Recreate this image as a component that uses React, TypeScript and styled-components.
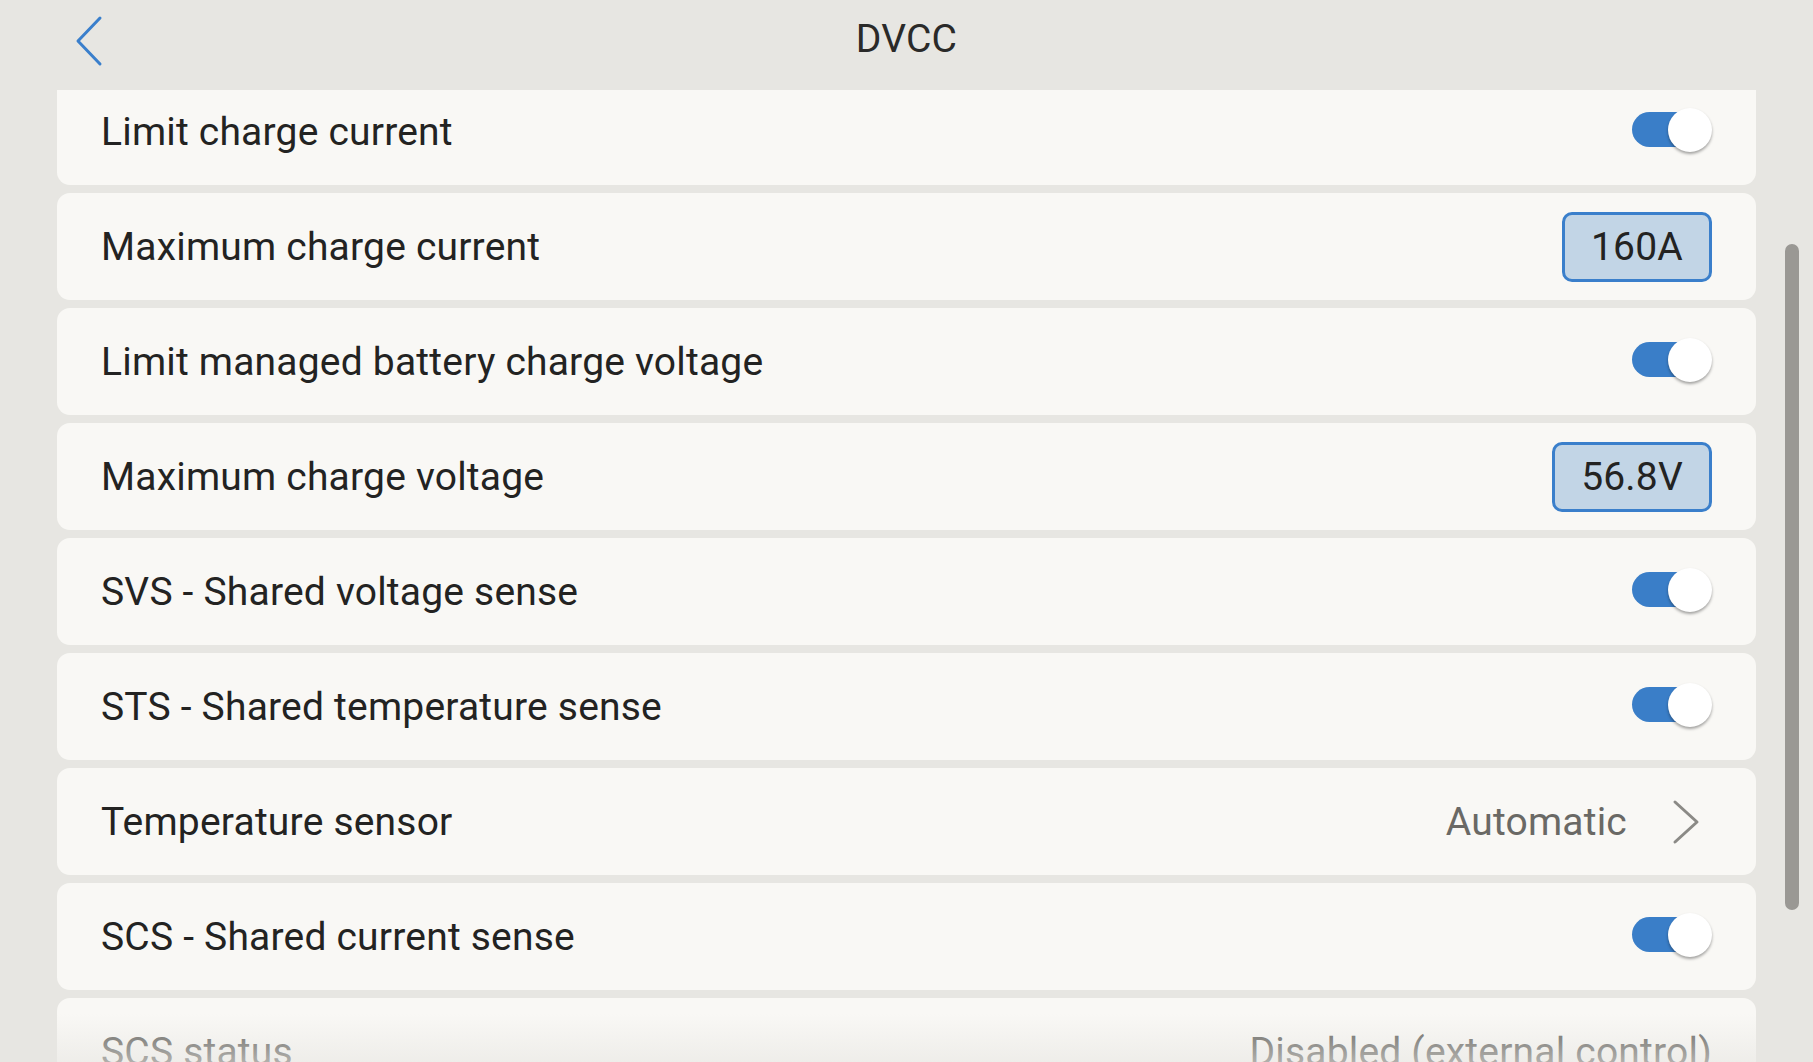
import React from "react";
import styled, { createGlobalStyle } from "styled-components";

const Global = createGlobalStyle`
  html, body { margin: 0; padding: 0; background: #e7e6e2; }
  body { font-family: Roboto, "Noto Sans", "Liberation Sans", sans-serif; }
  * { box-sizing: border-box; }
`;

const Screen = styled.div`
  position: relative;
  width: 1813px;
  height: 1062px;
  overflow: hidden;
  display: flex;
  flex-direction: column;
  background: #e7e6e2;
`;

const Header = styled.header`
  position: relative;
  z-index: 2;
  height: 90px;
  flex: 0 0 90px;
  display: flex;
  align-items: center;
  justify-content: center;
  background: #e7e6e2;
`;

const BackButton = styled.button`
  position: absolute;
  left: 66px;
  top: 10px;
  width: 46px;
  height: 62px;
  border: none;
  background: transparent;
  padding: 0;
  display: flex;
  align-items: center;
  justify-content: center;
  cursor: pointer;
`;

const Title = styled.h1`
  margin: 0;
  margin-top: -12px;
  font-size: 39px;
  font-weight: 400;
  color: #2a2a29;
  letter-spacing: 0.2px;
`;

const Body = styled.div`
  flex: 1;
  overflow: hidden;
  position: relative;
`;

const List = styled.div`
  margin: -12px 57px 0 57px;
  display: flex;
  flex-direction: column;
  gap: 8px;
`;

const Card = styled.div<{ $muted?: boolean }>`
  height: 107px;
  flex: 0 0 107px;
  background: #f9f8f5;
  border-radius: 13px;
  padding: 0 44px;
  display: flex;
  align-items: center;
  justify-content: space-between;
  color: ${(p) => (p.$muted ? "#5f5e5a" : "#232322")};
`;

const Label = styled.span`
  font-size: 39px;
  font-weight: 400;
  letter-spacing: 0.2px;
`;

const ValueBox = styled.div`
  height: 70px;
  padding: 0 26px;
  border: 3px solid #3a7fcb;
  border-radius: 10px;
  background: #c2d5e6;
  display: flex;
  align-items: center;
  font-size: 39px;
  letter-spacing: 0.2px;
  color: #232322;
`;

const ValueText = styled.span<{ $muted?: boolean }>`
  font-size: 39px;
  letter-spacing: 0.2px;
  color: ${(p) => (p.$muted ? "#5f5e5a" : "#6a6965")};
`;

const Trailing = styled.div`
  display: flex;
  align-items: center;
  gap: 44px;
`;

const ChevronIcon = styled.svg`
  margin-right: 11px;
`;

const ToggleWrap = styled.div`
  position: relative;
  width: 80px;
  height: 44px;
  display: flex;
  align-items: center;
  margin-top: -4px;
`;

const Track = styled.div`
  width: 78px;
  height: 35px;
  border-radius: 18px;
  background: #3a7ec8;
`;

const Knob = styled.div`
  position: absolute;
  right: 0;
  top: 0;
  width: 44px;
  height: 44px;
  border-radius: 50%;
  background: #ffffff;
  box-shadow: 0 2px 3px rgba(0, 0, 0, 0.35);
`;

const ScrollThumb = styled.div`
  position: absolute;
  right: 14px;
  top: 244px;
  width: 14px;
  height: 666px;
  border-radius: 7px;
  background: #9a9894;
  z-index: 3;
`;

const Fade = styled.div`
  position: absolute;
  left: 0;
  right: 0;
  bottom: 0;
  height: 48px;
  background: linear-gradient(
    to bottom,
    rgba(231, 230, 226, 0) 0%,
    rgba(231, 230, 226, 0.6) 100%
  );
  z-index: 2;
  pointer-events: none;
`;

const Toggle = () => (
  <ToggleWrap>
    <Track />
    <Knob />
  </ToggleWrap>
);

const Chevron = () => (
  <ChevronIcon width="30" height="46" viewBox="0 0 30 46" fill="none">
    <path
      d="M4 3 L26 23 L4 43"
      stroke="#8b8a86"
      strokeWidth="3"
      strokeLinecap="round"
      strokeLinejoin="round"
    />
  </ChevronIcon>
);

type Row =
  | { label: string; kind: "toggle" }
  | { label: string; kind: "box"; value: string }
  | { label: string; kind: "link"; value: string }
  | { label: string; kind: "text"; value: string };

const rows: Row[] = [
  { label: "Limit charge current", kind: "toggle" },
  { label: "Maximum charge current", kind: "box", value: "160A" },
  { label: "Limit managed battery charge voltage", kind: "toggle" },
  { label: "Maximum charge voltage", kind: "box", value: "56.8V" },
  { label: "SVS - Shared voltage sense", kind: "toggle" },
  { label: "STS - Shared temperature sense", kind: "toggle" },
  { label: "Temperature sensor", kind: "link", value: "Automatic" },
  { label: "SCS - Shared current sense", kind: "toggle" },
  { label: "SCS status", kind: "text", value: "Disabled (external control)" },
];

export default function App() {
  return (
    <Screen>
      <Global />
      <Header>
        <BackButton aria-label="Back">
          <svg width="30" height="52" viewBox="0 0 30 52" fill="none">
            <path
              d="M26 3 L4 26 L26 49"
              stroke="#3a7fcc"
              strokeWidth="3"
              strokeLinecap="round"
              strokeLinejoin="round"
            />
          </svg>
        </BackButton>
        <Title>DVCC</Title>
      </Header>
      <Body>
        <List>
          {rows.map((r) => (
            <Card key={r.label} $muted={r.kind === "text"}>
              <Label>{r.label}</Label>
              {r.kind === "toggle" && <Toggle />}
              {r.kind === "box" && <ValueBox>{r.value}</ValueBox>}
              {r.kind === "link" && (
                <Trailing>
                  <ValueText>{r.value}</ValueText>
                  <Chevron />
                </Trailing>
              )}
              {r.kind === "text" && <ValueText $muted>{r.value}</ValueText>}
            </Card>
          ))}
        </List>
      </Body>
      <ScrollThumb />
      <Fade />
    </Screen>
  );
}
